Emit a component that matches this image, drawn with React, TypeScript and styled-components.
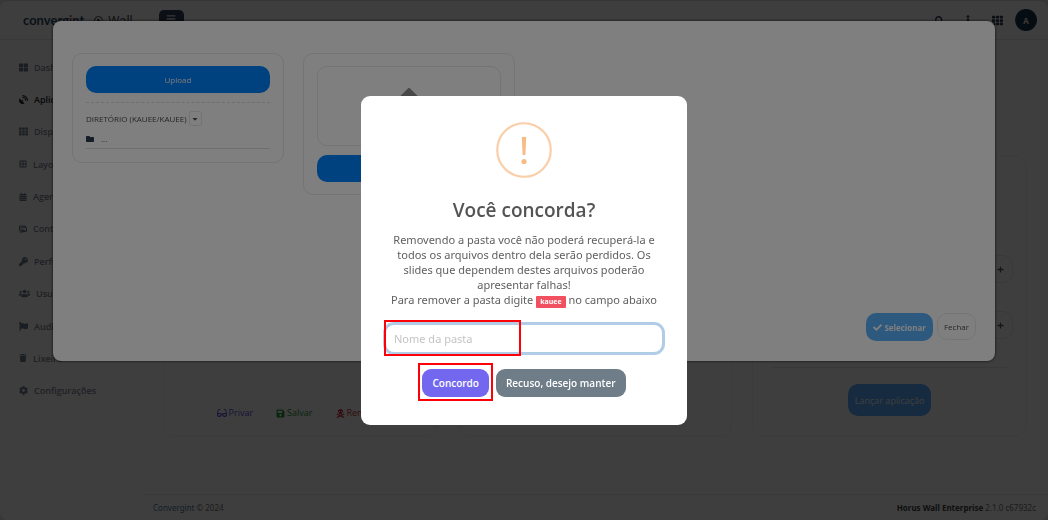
import React from "react";
import styled, { createGlobalStyle } from "styled-components";
import {
  FaBorderAll,
  FaCalendarAlt,
  FaCaretDown,
  FaCheck,
  FaCog,
  FaFlag,
  FaFolder,
  FaGlasses,
  FaKey,
  FaPlus,
  FaSatelliteDish,
  FaSave,
  FaSearch,
  FaSkullCrossbones,
  FaTh,
  FaThLarge,
  FaTrash,
  FaUpload,
  FaUsers,
  FaEllipsisV,
  FaBars,
} from "react-icons/fa";

const GlobalStyle = createGlobalStyle`
  *, *::before, *::after { box-sizing: border-box; }
  body {
    margin: 0;
    background: #e0e0e0;
    font-family: "Open Sans", sans-serif;
    font-size: 10px;
    color: #4a4a4a;
  }
  button, input { font-family: inherit; }
  svg { display: block; flex: none; }
`;

const Page = styled.div`
  min-height: 100vh;
  display: flex;
  flex-direction: column;
  background: #fafafa;
  border-top: 1px solid #d8d8d8;
  border-radius: 8px;
`;

const TopBar = styled.header`
  display: flex;
  align-items: center;
  height: 39px;
  padding: 0 11px 0 23px;
  border-bottom: 1px solid #e4e4e4;
`;

const Brand = styled.a`
  display: flex;
  align-items: center;
  color: #2c4a68;
  text-decoration: none;
`;

const BrandName = styled.span`
  width: 71px;
  font-family: Lato, sans-serif;
  font-size: 13px;
  font-weight: 700;
  line-height: 18px;

  em {
    font-style: normal;
    color: #d04040;
  }
`;

const Product = styled.span`
  padding-left: 5px;
  font-family: Roboto, sans-serif;
  font-size: 13px;
  color: #505050;
`;

const MenuButton = styled.button`
  display: flex;
  justify-content: center;
  width: 25px;
  height: 20px;
  margin-left: 26px;
  padding: 4px 0;
  border: 0;
  border-radius: 5px;
  background: #303c54;
  color: #e0e0e0;
`;

const Tools = styled.div`
  display: flex;
  align-items: center;
  gap: 19px;
  margin-left: auto;
`;

const IconButton = styled.button`
  display: flex;
  justify-content: center;
  width: 10px;
  padding: 0;
  border: 0;
  background: none;
  color: #303c54;
`;

const Avatar = styled.button`
  width: 22px;
  height: 22px;
  margin-left: -6px;
  padding: 0;
  border: 0;
  border-radius: 50%;
  background: #1a3448;
  color: #e0e0e0;
  font-size: 8px;
  font-weight: 700;
`;

const Body = styled.div`
  flex: 1;
  display: flex;
`;

const Sidebar = styled.nav`
  flex: none;
  display: flex;
  flex-direction: column;
  width: 143px;
  height: 356px;
  padding: 0 19px;
  margin-top: 11px;
`;

const NavItem = styled.a<{ $active?: boolean }>`
  flex: 1;
  display: flex;
  align-items: center;
  gap: 6px;
  color: ${(p) => (p.$active ? "#202028" : "#7c8494")};
  font-size: 9px;
  font-weight: 600;
  text-decoration: none;

  svg {
    color: ${(p) => (p.$active ? "#202028" : "#687488")};
  }
`;

const Content = styled.div`
  flex: 1;
  display: flex;
  flex-direction: column;
`;

const Cards = styled.main`
  flex: 1;
  display: grid;
  grid-template-columns: repeat(3, 1fr);
  gap: 20px;
  padding: 115px 21px 57px 20px;
`;

const Card = styled.section`
  display: flex;
  flex-direction: column;
  justify-content: flex-end;
  min-height: 280px;
  padding: 17px 20px;
  border: 1px solid #ececec;
  border-radius: 12px;
`;

const Actions = styled.div`
  display: flex;
  justify-content: center;
  gap: 23px;
`;

const Action = styled.button<{ $color: string }>`
  display: flex;
  align-items: center;
  gap: 2px;
  padding: 0;
  border: 0;
  background: none;
  color: ${(p) => p.$color};
  font-size: 9px;
  line-height: 12px;
`;

const LaunchCard = styled(Card)`
  align-items: center;
  padding: 20px 19px;
`;

const AddButton = styled.button`
  display: flex;
  align-items: center;
  align-self: flex-end;
  justify-content: center;
  width: 25px;
  height: 28px;
  margin: 0 -6px 28px 0;
  border: 1px solid #e4e4e4;
  border-radius: 10px;
  background: none;
  color: #505868;
`;

const Rule = styled.hr`
  width: 100%;
  margin: 0;
  border: 0;
  border-top: 1px solid #e6e6e6;
`;

const LaunchButton = styled.button`
  height: 32px;
  margin-top: 16px;
  padding: 0 7px;
  border: 0;
  border-radius: 10px;
  background: #58acff;
  color: #f8f8f8;
  font-size: 9px;
`;

const Footer = styled.footer`
  display: flex;
  justify-content: space-between;
  padding: 6px 12px 6px 10px;
  border-top: 1px solid #e4e4e4;
  color: #707070;
  font-family: "Noto Sans", sans-serif;
  font-size: 8px;
  line-height: 13px;

  a {
    color: #507898;
    text-decoration: none;
  }
  b {
    color: #404040;
  }
`;

const Backdrop = styled.div<{ $center?: boolean }>`
  position: fixed;
  inset: 0;
  display: flex;
  justify-content: center;
  align-items: ${(p) => (p.$center ? "center" : "flex-start")};
  padding: ${(p) => (p.$center ? "0" : "21px 53px")};
  background: rgba(0, 0, 0, 0.5);
`;

const FileModal = styled.section`
  flex: 1;
  display: flex;
  flex-direction: column;
  min-height: 340px;
  padding: 32px 19px 20px;
  border-radius: 8px;
  background: #fff;
  box-shadow: 0 0 3px rgba(0, 0, 0, 0.8);
`;

const Panels = styled.div`
  flex: 1;
  display: grid;
  grid-template-columns: repeat(4, 1fr);
  align-items: start;
  gap: 19px;
`;

const Panel = styled.div`
  padding: 12px 13px;
  border: 1px solid #e8e8e8;
  border-radius: 10px;
`;

const UploadButton = styled.button`
  display: block;
  width: 100%;
  height: 27px;
  border: 0;
  border-radius: 10px;
  background: #0084ff;
  color: #f4f4f4;
  font-size: 8px;
`;

const DirectoryRow = styled.div`
  display: flex;
  align-items: center;
  gap: 2px;
  margin-top: 9px;
  padding-top: 8px;
  border-top: 1px dashed #dcdcdc;
  font-size: 8px;
  line-height: 14px;
`;

const CaretButton = styled.button`
  display: flex;
  align-items: center;
  justify-content: center;
  width: 13px;
  height: 15px;
  padding: 0;
  border: 1px solid #e4e4e4;
  border-radius: 3px;
  background: none;
  color: #505050;
`;

const FolderRow = styled.a`
  display: flex;
  align-items: center;
  gap: 7px;
  margin-bottom: 1px;
  padding: 5px 0 1px;
  border-bottom: 1px solid #dedede;
  color: #606060;
  font-size: 8px;
  line-height: 16px;
  text-decoration: none;

  svg {
    color: #2c3c50;
  }
`;

const DropArea = styled.div`
  display: flex;
  justify-content: center;
  height: 80px;
  margin-bottom: 9px;
  padding-top: 21px;
  border: 1px solid #e8e8e8;
  border-radius: 10px;
  color: #909090;
`;

const ModalFooter = styled.div`
  display: flex;
  align-items: flex-start;
  justify-content: flex-end;
  gap: 4px;
`;

const SelectButton = styled.button`
  display: flex;
  align-items: center;
  gap: 2px;
  height: 28px;
  padding: 0 7px;
  border: 0;
  border-radius: 10px;
  background: #5ab2ff;
  color: #fff;
  font-size: 8px;
  font-weight: 700;
`;

const CloseButton = styled.button`
  height: 27px;
  padding: 0 6px;
  border: 1px solid #ebebeb;
  border-radius: 10px;
  background: none;
  color: #505050;
  font-size: 8px;
`;

const Dialog = styled.section`
  display: flex;
  flex-direction: column;
  align-items: center;
  width: 326px;
  padding: 26px 22px 28px;
  border-radius: 9px;
  background: #fff;
`;

const DialogIcon = styled.svg`
  width: 56px;
  height: 56px;
`;

const DialogTitle = styled.h2`
  margin: 18px 0 8px;
  color: #545454;
  font-size: 19px;
  font-weight: 600;
  line-height: 28px;
`;

const DialogText = styled.p`
  margin: 0;
  color: #606060;
  font-family: "Noto Sans", sans-serif;
  font-size: 11px;
  line-height: 15px;
  text-align: center;
  white-space: nowrap;
`;

const Tag = styled.span`
  display: inline-block;
  padding: 0 4px;
  border-radius: 1px;
  background: #f05060;
  color: #fff;
  font-family: "Open Sans", sans-serif;
  font-size: 7px;
  font-weight: 700;
  line-height: 12px;
`;

const Marked = styled.div`
  position: relative;
`;

const Marker = styled.span<{ $inset: string }>`
  position: absolute;
  inset: ${(p) => p.$inset};
  border: 2px solid #ff0008;
  pointer-events: none;
`;

const Field = styled(Marked)`
  align-self: stretch;
  margin-top: 14px;
`;

const NameInput = styled.input`
  display: block;
  width: 100%;
  height: 33px;
  padding: 0 8px;
  border: 3px solid #b0cce6;
  border-radius: 11px;
  background: #fff;
  font-family: "Noto Sans", sans-serif;
  font-size: 11px;
  outline: 0;

  &::placeholder {
    color: #c4c4c4;
    opacity: 1;
  }
`;

const DialogButtons = styled.div`
  display: flex;
  gap: 7px;
  margin-top: 14px;
`;

const DialogButton = styled.button<{ $color: string }>`
  display: block;
  height: 28px;
  padding: 0 10px;
  border: 0;
  border-radius: 9px;
  background: ${(p) => p.$color};
  color: #fff;
  font-size: 10px;
  font-weight: 600;
`;

const ScreensIcon = () => (
  <svg width="8" height="8" viewBox="0 0 16 16" fill="none" stroke="currentColor" strokeWidth="2">
    <path d="M3 11H1V2h12v2" />
    <rect x="4" y="5" width="11" height="8" rx="1" />
    <path d="M5 12l3-4 3 3 2-2v3z" fill="currentColor" stroke="none" />
    <path d="M1 14h8" />
  </svg>
);

const PlayIcon = () => (
  <svg width="9" height="9" viewBox="0 0 18 18">
    <circle cx="9" cy="9" r="8" fill="none" stroke="#404040" strokeWidth="2" />
    <path d="M6.500 5v8l6.500-4z" fill="#303030" />
  </svg>
);

const navItems = [
  { label: "Dashboard", icon: <FaThLarge size={9} /> },
  { label: "Aplicações", icon: <FaSatelliteDish size={9} />, active: true },
  { label: "Dispositivos", icon: <FaTh size={9} /> },
  { label: "Layouts", icon: <FaBorderAll size={8} /> },
  { label: "Agendas", icon: <FaCalendarAlt size={8} /> },
  { label: "Conteúdos", icon: <ScreensIcon /> },
  { label: "Perfis", icon: <FaKey size={9} /> },
  { label: "Usuários", icon: <FaUsers size={11} /> },
  { label: "Auditoria", icon: <FaFlag size={9} /> },
  { label: "Lixeira", icon: <FaTrash size={8} /> },
  { label: "Configurações", icon: <FaCog size={9} /> },
];

export default function App() {
  return (
    <>
      <GlobalStyle />
      <Page>
        <TopBar>
          <Brand href="#">
            <BrandName>
              converg<em>i</em>nt
            </BrandName>
            <PlayIcon />
            <Product>Wall</Product>
          </Brand>
          <MenuButton aria-label="Menu">
            <FaBars size={10} />
          </MenuButton>
          <Tools>
            <IconButton aria-label="Buscar">
              <FaSearch size={9} />
            </IconButton>
            <IconButton aria-label="Mais">
              <FaEllipsisV size={10} />
            </IconButton>
            <IconButton aria-label="Aplicativos">
              <FaTh size={11} />
            </IconButton>
            <Avatar>A</Avatar>
          </Tools>
        </TopBar>
        <Body>
          <Sidebar>
            {navItems.map((item) => (
              <NavItem key={item.label} href="#" $active={item.active}>
                {item.icon}
                {item.label}
              </NavItem>
            ))}
          </Sidebar>
          <Content>
            <Cards>
              <Card>
                <Actions>
                  <Action $color="#5850d8">
                    <FaGlasses size={10} />
                    Privar
                  </Action>
                  <Action $color="#209830">
                    <FaSave size={9} />
                    Salvar
                  </Action>
                  <Action $color="#c83040">
                    <FaSkullCrossbones size={9} />
                    Remover
                  </Action>
                </Actions>
              </Card>
              <Card />
              <LaunchCard>
                <AddButton aria-label="Adicionar layout">
                  <FaPlus size={7} />
                </AddButton>
                <AddButton aria-label="Adicionar dispositivo">
                  <FaPlus size={7} />
                </AddButton>
                <Rule />
                <LaunchButton>Lançar aplicação</LaunchButton>
              </LaunchCard>
            </Cards>
            <Footer>
              <span>
                <a href="#">Convergint</a> © 2024
              </span>
              <span>
                <b>Horus Wall Enterprise</b> 2.1.0 c67932c
              </span>
            </Footer>
          </Content>
        </Body>
      </Page>

      <Backdrop>
        <FileModal role="dialog" aria-label="Arquivos">
          <Panels>
            <Panel>
              <UploadButton>Upload</UploadButton>
              <DirectoryRow>
                DIRETÓRIO (KAUEE/KAUEE)
                <CaretButton aria-label="Opções do diretório">
                  <FaCaretDown size={8} />
                </CaretButton>
              </DirectoryRow>
              <FolderRow href="#">
                <FaFolder size={8} />
                ...
              </FolderRow>
            </Panel>
            <Panel>
              <DropArea>
                <FaUpload size={32} />
              </DropArea>
              <UploadButton aria-label="Enviar" />
            </Panel>
          </Panels>
          <ModalFooter>
            <SelectButton>
              <FaCheck size={9} />
              Selecionar
            </SelectButton>
            <CloseButton>Fechar</CloseButton>
          </ModalFooter>
        </FileModal>
      </Backdrop>

      <Backdrop $center>
        <Dialog role="alertdialog" aria-labelledby="confirm-title">
          <DialogIcon viewBox="0 0 56 56" aria-hidden="true">
            <circle cx="28" cy="28" r="26.750" fill="none" stroke="#facea8" strokeWidth="2.200" />
            <path d="M25.800 15h4.400l-.8 18h-2.800z" fill="#f8bb86" />
            <circle cx="28" cy="39.500" r="2.600" fill="#f8bb86" />
          </DialogIcon>
          <DialogTitle id="confirm-title">Você concorda?</DialogTitle>
          <DialogText>
            Removendo a pasta você não poderá recuperá-la e
            <br />
            todos os arquivos dentro dela serão perdidos. Os
            <br />
            slides que dependem destes arquivos poderão
            <br />
            apresentar falhas!
            <br />
            Para remover a pasta digite <Tag>kauee</Tag> no campo abaixo
          </DialogText>
          <Field>
            <NameInput aria-label="Nome da pasta" placeholder="Nome da pasta" />
            <Marker $inset="-2px 144px -1px 1px" />
          </Field>
          <DialogButtons>
            <Marked>
              <DialogButton $color="#7367f0">Concordo</DialogButton>
              <Marker $inset="-6px -4px -4px" />
            </Marked>
            <DialogButton $color="#6e7d88">Recuso, desejo manter</DialogButton>
          </DialogButtons>
        </Dialog>
      </Backdrop>
    </>
  );
}
